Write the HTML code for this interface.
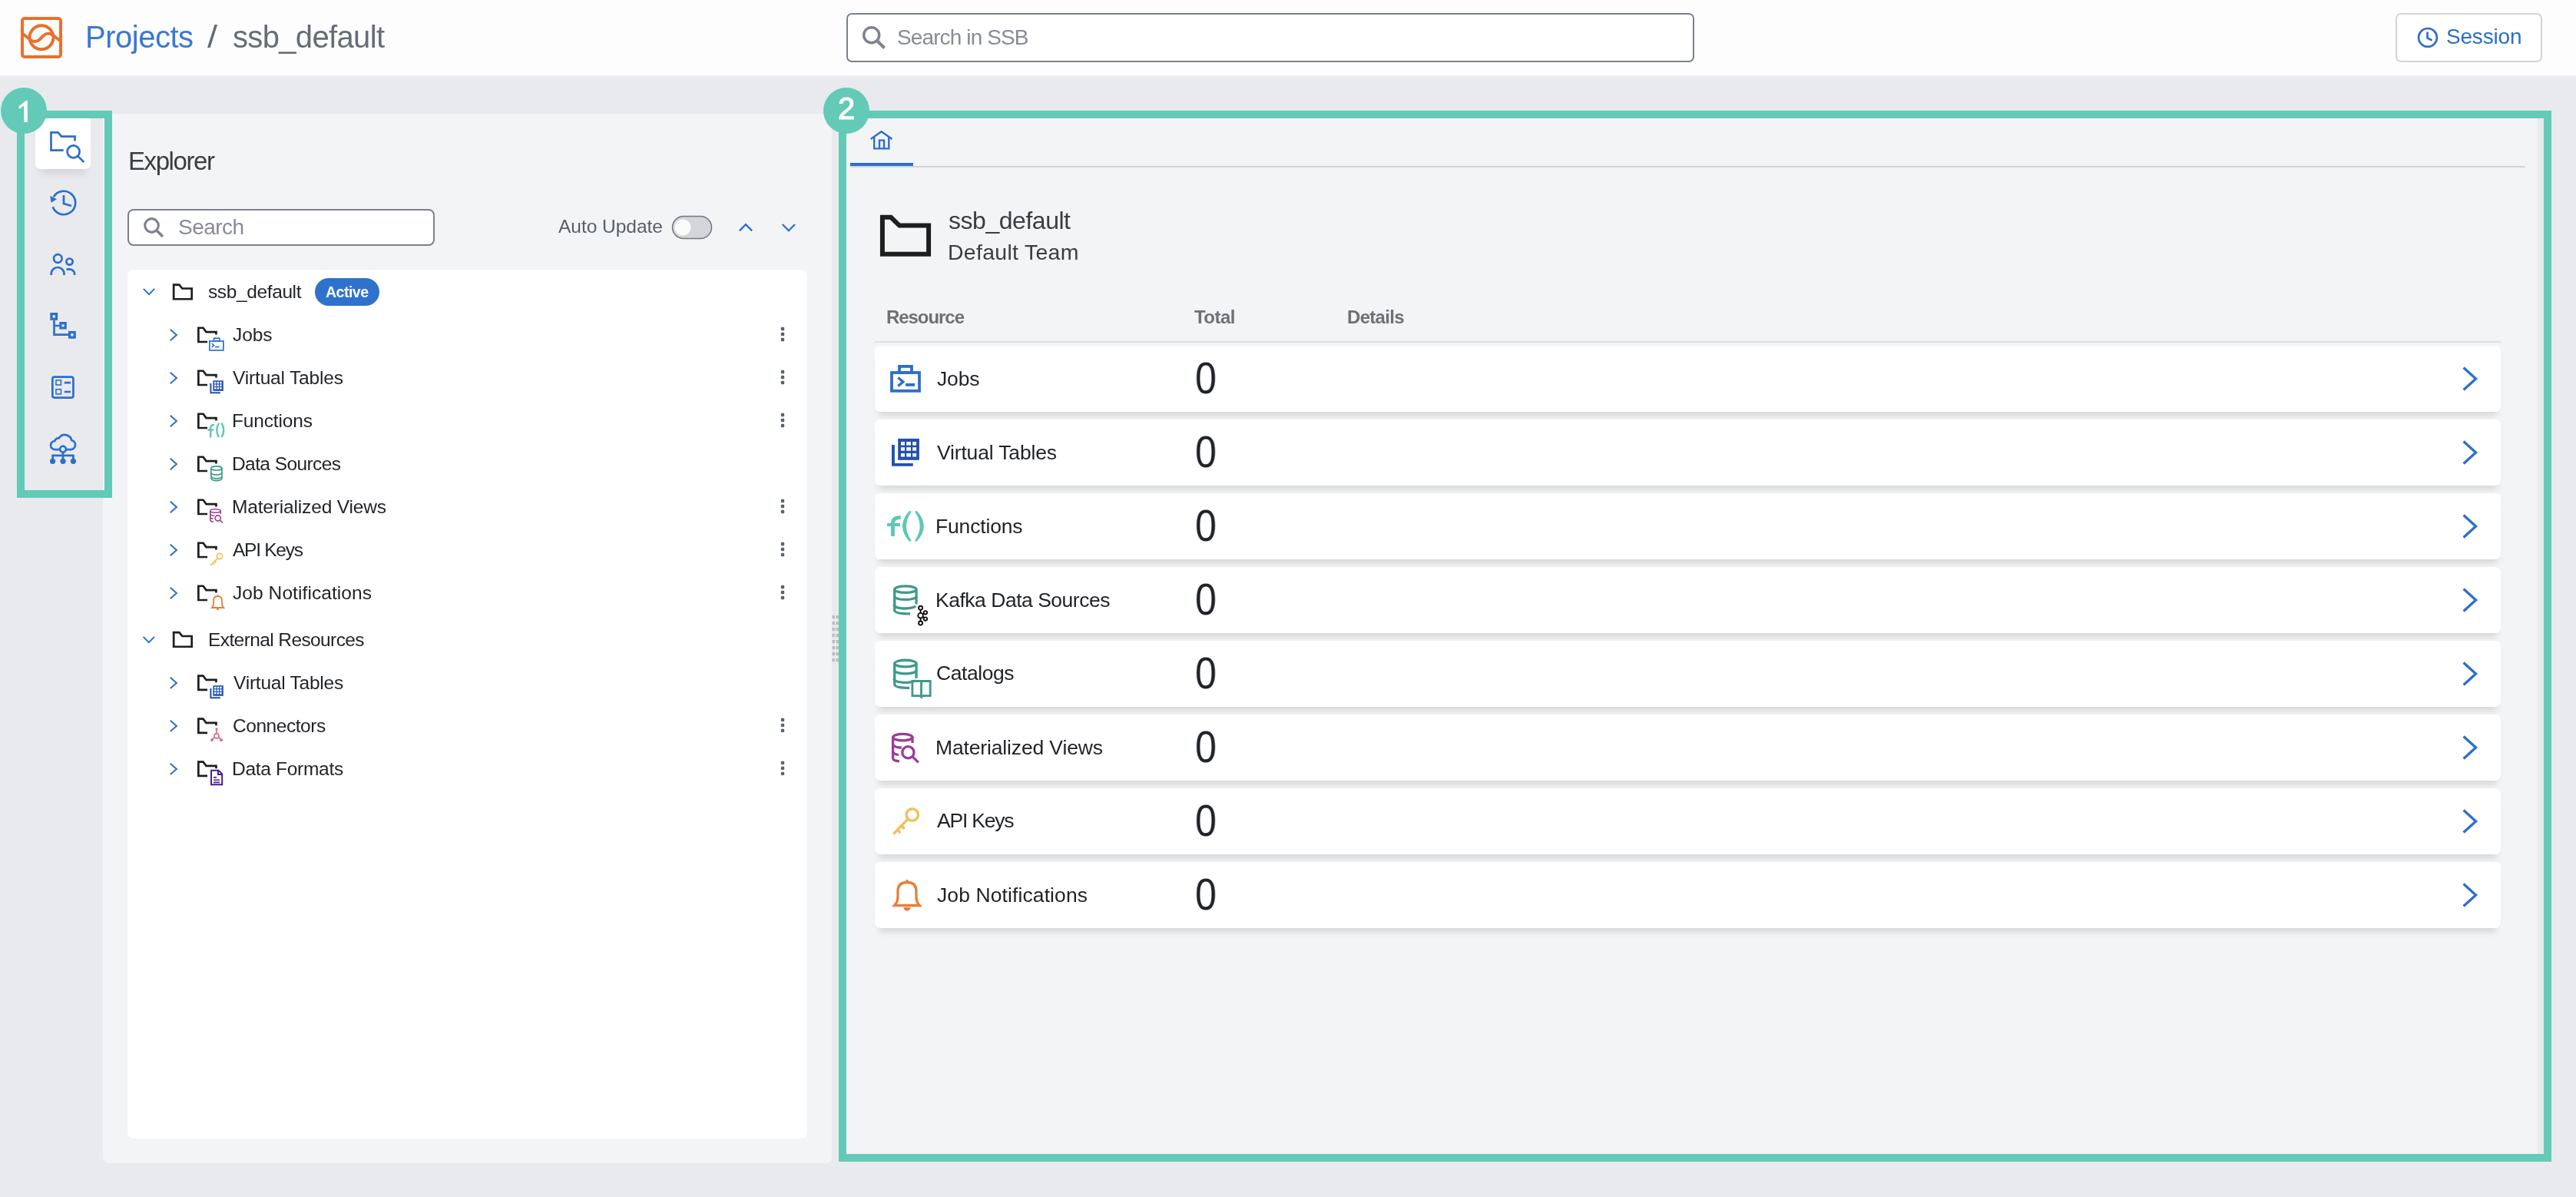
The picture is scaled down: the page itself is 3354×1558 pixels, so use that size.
<!DOCTYPE html>
<html><head><meta charset="utf-8"><style>
*{margin:0;padding:0;box-sizing:border-box}
html,body{width:3354px;height:1558px;overflow:hidden;background:#e9eaed;font-family:"Liberation Sans",sans-serif}
.a{position:absolute}
.t{position:absolute;white-space:nowrap;font-family:"Liberation Sans",sans-serif;will-change:transform}
.card{position:absolute;left:1139px;width:2117px;height:86px;background:#fff;border-radius:7px;box-shadow:0 10px 8px -5px rgba(0,0,0,0.12)}
svg{position:absolute;left:0;top:0}
.ov{z-index:10}
</style></head><body>
<div class="a" style="left:0;top:0;width:3354px;height:98px;background:#fdfdfd"></div><div class="a" style="left:0;top:98px;width:3354px;height:2px;background:#f0f1f3"></div>
<div class="a" style="left:1102px;top:17px;width:1104px;height:64px;border:2px solid #7a8189;border-radius:7px;background:#fff"></div>
<div class="a" style="left:3119px;top:17px;width:191px;height:64px;border:2px solid #d2d5d9;border-radius:7px;background:#fff"></div>
<div class="a" style="left:134px;top:148px;width:949px;height:1366px;background:#f3f4f6;border-radius:0 0 8px 8px"></div>
<div class="a" style="left:1092px;top:148px;width:2212px;height:1364px;background:#f3f4f6"></div>
<div class="a" style="left:46px;top:148px;width:72px;height:72px;background:#fff;border-radius:0 0 7px 7px;box-shadow:0 12px 10px -6px rgba(0,0,0,0.09)"></div>
<div class="a" style="left:166px;top:272px;width:400px;height:48px;border:2px solid #7a8189;border-radius:8px;background:#fff"></div>
<div class="a" style="left:166px;top:351px;width:885px;height:1131px;background:#fff;border-radius:8px"></div>
<div class="a" style="left:410px;top:362px;width:84px;height:36px;background:#2f72cd;border-radius:18px"></div>
<div class="card" style="top:450px"></div><div class="card" style="top:546px"></div><div class="card" style="top:642px"></div><div class="card" style="top:738px"></div><div class="card" style="top:834px"></div><div class="card" style="top:930px"></div><div class="card" style="top:1026px"></div><div class="card" style="top:1122px"></div>
<svg width="3354" height="1558" viewBox="0 0 3354 1558"><g transform="translate(27,22)" fill="none" stroke="#e8702e" stroke-width="4"><rect x="2" y="2" width="50" height="50" rx="3"/><circle cx="27" cy="26.8" r="15.5"/><path d="M2 21.5 L13 30 C16 32.5 21 33 24.5 29.5 L29.5 24.5 C33 21 38 21 41.5 23.5 L52 31.5"/></g><g fill="none" stroke="#7d848b"><circle cx="1134.7" cy="45.7" r="10" stroke-width="3.5"/><path d="M1141.5 52.5 L1151.5 62.5" stroke-width="4"/></g><g fill="none" stroke="#2c6dc9" stroke-width="2.6"><circle cx="3161" cy="48.9" r="11.9"/><path d="M3160.5 41.5 V49.5 L3166.5 52.5"/></g><g fill="none" stroke="#7d848b"><circle cx="197.5" cy="293.5" r="8.8" stroke-width="3.2"/><path d="M203.5 299.5 L212 308" stroke-width="3.5"/></g><g fill="none" stroke="#2c6fcc" stroke-width="2.7"><path d="M97.5 183.4 V177.6 H80 L75.5 172.3 H66.5 V195.6 H82.7"/><circle cx="95.6" cy="197.4" r="8"/><path d="M101.3 203.1 L109.3 211"/><path d="M68.7 269.2 A15.2 15.2 0 1 0 69.8 256.4" /><path d="M83 254 V265 L93 268"/><circle cx="75.3" cy="336.5" r="5.3"/><path d="M66.7 358 V356.4 A8.4 8.4 0 0 1 83.5 356.4 V358"/><circle cx="90.5" cy="340.6" r="4.1"/><path d="M86.5 350.6 C92 349.5 97.2 351.5 97.2 358"/><path d="M70.5 416.7 V435.6 H89 M70.5 424 H77.3"/></g><path d="M65.3 255 L74 259.3 L66.5 263.8 Z" fill="#2c6fcc"/><g fill="none" stroke="#2c6fcc" stroke-width="3.2"><rect x="66.9" y="408.6" width="6.6" height="6.6"/><rect x="78.9" y="420.6" width="6.3" height="6.3"/><rect x="90.6" y="432.5" width="6.6" height="6.6"/></g><g fill="none" stroke="#2c6fcc"><rect x="68.35" y="490.55" width="27.1" height="27" rx="2.5" stroke-width="2.7"/><rect x="72.95" y="494.85" width="6.5" height="6.1" stroke-width="1.6"/><rect x="72.95" y="506.75" width="6.5" height="6.1" stroke-width="1.6"/><path d="M83.8 498.2 H92 M83.8 510 H92" stroke-width="2.7"/></g><g fill="none" stroke="#2c6fcc" stroke-width="2.7"><path d="M77.5 585.2 H72 A5.6 5.6 0 0 1 71.2 574 A6.2 6.2 0 0 1 76.8 570.2 A9 9 0 0 1 93.2 573 A6.2 6.2 0 0 1 92.5 585.2 H86.5"/><circle cx="82" cy="584.6" r="3.9"/><path d="M82 588.5 V600 M68.6 600 V592.8 H95.4 V600"/></g><g fill="#2c6fcc"><circle cx="68.6" cy="600.3" r="3.6"/><circle cx="82" cy="600.3" r="3.6"/><circle cx="95.4" cy="600.3" r="3.6"/></g><polyline points="186.8,375.9 194,383.1 201.2,375.9" fill="none" stroke="#2c6fcc" stroke-width="2"/><path d="M226.15 370.65 H233.3 L237.3 375.5 H249.65 V389.25 H226.15 Z" fill="none" stroke="#1e1e1e" stroke-width="2.7"/><polyline points="221.7,428.8 229.9,436 221.7,443.2" fill="none" stroke="#2c6fcc" stroke-width="2"/><path d="M270 445 H258.35 V426.75 H264.5 L268.5 432.05 H281.45 V435.4" fill="none" stroke="#1e1e1e" stroke-width="2.7"/><rect x="1016.8" y="425.8" width="4.4" height="4.4" rx="1.2" fill="#5c636a"/><rect x="1016.8" y="432.8" width="4.4" height="4.4" rx="1.2" fill="#5c636a"/><rect x="1016.8" y="439.8" width="4.4" height="4.4" rx="1.2" fill="#5c636a"/><polyline points="221.7,484.8 229.9,492 221.7,499.2" fill="none" stroke="#2c6fcc" stroke-width="2"/><path d="M270 501 H258.35 V482.75 H264.5 L268.5 488.05 H281.45 V491.4" fill="none" stroke="#1e1e1e" stroke-width="2.7"/><rect x="1016.8" y="481.8" width="4.4" height="4.4" rx="1.2" fill="#5c636a"/><rect x="1016.8" y="488.8" width="4.4" height="4.4" rx="1.2" fill="#5c636a"/><rect x="1016.8" y="495.8" width="4.4" height="4.4" rx="1.2" fill="#5c636a"/><polyline points="221.7,540.8 229.9,548 221.7,555.2" fill="none" stroke="#2c6fcc" stroke-width="2"/><path d="M270 557 H258.35 V538.75 H264.5 L268.5 544.05 H281.45 V547.4" fill="none" stroke="#1e1e1e" stroke-width="2.7"/><rect x="1016.8" y="537.8" width="4.4" height="4.4" rx="1.2" fill="#5c636a"/><rect x="1016.8" y="544.8" width="4.4" height="4.4" rx="1.2" fill="#5c636a"/><rect x="1016.8" y="551.8" width="4.4" height="4.4" rx="1.2" fill="#5c636a"/><polyline points="221.7,596.8 229.9,604 221.7,611.2" fill="none" stroke="#2c6fcc" stroke-width="2"/><path d="M270 613 H258.35 V594.75 H264.5 L268.5 600.05 H281.45 V603.4" fill="none" stroke="#1e1e1e" stroke-width="2.7"/><polyline points="221.7,652.8 229.9,660 221.7,667.2" fill="none" stroke="#2c6fcc" stroke-width="2"/><path d="M270 669 H258.35 V650.75 H264.5 L268.5 656.05 H281.45 V659.4" fill="none" stroke="#1e1e1e" stroke-width="2.7"/><rect x="1016.8" y="649.8" width="4.4" height="4.4" rx="1.2" fill="#5c636a"/><rect x="1016.8" y="656.8" width="4.4" height="4.4" rx="1.2" fill="#5c636a"/><rect x="1016.8" y="663.8" width="4.4" height="4.4" rx="1.2" fill="#5c636a"/><polyline points="221.7,708.8 229.9,716 221.7,723.2" fill="none" stroke="#2c6fcc" stroke-width="2"/><path d="M270 725 H258.35 V706.75 H264.5 L268.5 712.05 H281.45 V715.4" fill="none" stroke="#1e1e1e" stroke-width="2.7"/><rect x="1016.8" y="705.8" width="4.4" height="4.4" rx="1.2" fill="#5c636a"/><rect x="1016.8" y="712.8" width="4.4" height="4.4" rx="1.2" fill="#5c636a"/><rect x="1016.8" y="719.8" width="4.4" height="4.4" rx="1.2" fill="#5c636a"/><polyline points="221.7,764.8 229.9,772 221.7,779.2" fill="none" stroke="#2c6fcc" stroke-width="2"/><path d="M270 781 H258.35 V762.75 H264.5 L268.5 768.05 H281.45 V771.4" fill="none" stroke="#1e1e1e" stroke-width="2.7"/><rect x="1016.8" y="761.8" width="4.4" height="4.4" rx="1.2" fill="#5c636a"/><rect x="1016.8" y="768.8" width="4.4" height="4.4" rx="1.2" fill="#5c636a"/><rect x="1016.8" y="775.8" width="4.4" height="4.4" rx="1.2" fill="#5c636a"/><polyline points="186.60000000000002,828.9 193.8,836.1 201.0,828.9" fill="none" stroke="#2c6fcc" stroke-width="2"/><path d="M226.15 823.15 H233.3 L237.3 828.0 H249.65 V841.75 H226.15 Z" fill="none" stroke="#1e1e1e" stroke-width="2.7"/><polyline points="221.7,881.6999999999999 229.9,888.9 221.7,896.1" fill="none" stroke="#2c6fcc" stroke-width="2"/><path d="M270 897.9 H258.35 V879.65 H264.5 L268.5 884.9499999999999 H281.45 V888.3" fill="none" stroke="#1e1e1e" stroke-width="2.7"/><polyline points="221.7,937.6999999999999 229.9,944.9 221.7,952.1" fill="none" stroke="#2c6fcc" stroke-width="2"/><path d="M270 953.9 H258.35 V935.65 H264.5 L268.5 940.9499999999999 H281.45 V944.3" fill="none" stroke="#1e1e1e" stroke-width="2.7"/><rect x="1016.8" y="934.6999999999999" width="4.4" height="4.4" rx="1.2" fill="#5c636a"/><rect x="1016.8" y="941.6999999999999" width="4.4" height="4.4" rx="1.2" fill="#5c636a"/><rect x="1016.8" y="948.6999999999999" width="4.4" height="4.4" rx="1.2" fill="#5c636a"/><polyline points="221.7,993.6999999999999 229.9,1000.9 221.7,1008.1" fill="none" stroke="#2c6fcc" stroke-width="2"/><path d="M270 1009.9 H258.35 V991.65 H264.5 L268.5 996.9499999999999 H281.45 V1000.3" fill="none" stroke="#1e1e1e" stroke-width="2.7"/><rect x="1016.8" y="990.6999999999999" width="4.4" height="4.4" rx="1.2" fill="#5c636a"/><rect x="1016.8" y="997.6999999999999" width="4.4" height="4.4" rx="1.2" fill="#5c636a"/><rect x="1016.8" y="1004.6999999999999" width="4.4" height="4.4" rx="1.2" fill="#5c636a"/><g fill="none" stroke="#2c6fcc" stroke-width="1.7"><rect x="272.85" y="443.95" width="18" height="12"/><rect x="278.6" y="440.25" width="7.2" height="3.7"/><polyline points="275.8,447 278.4,449.4 275.8,451.8"/><path d="M280 451.5 H285.5"/></g><rect x="277.4" y="495.3" width="13.4" height="13.6" fill="#2251b3"/><rect x="279.0" y="496.9" width="2.4" height="2.4" fill="#fff"/><rect x="282.6" y="496.9" width="2.4" height="2.4" fill="#fff"/><rect x="286.2" y="496.9" width="2.4" height="2.4" fill="#fff"/><rect x="279.0" y="500.5" width="2.4" height="2.4" fill="#fff"/><rect x="282.6" y="500.5" width="2.4" height="2.4" fill="#fff"/><rect x="286.2" y="500.5" width="2.4" height="2.4" fill="#fff"/><rect x="279.0" y="504.1" width="2.4" height="2.4" fill="#fff"/><rect x="282.6" y="504.1" width="2.4" height="2.4" fill="#fff"/><rect x="286.2" y="504.1" width="2.4" height="2.4" fill="#fff"/><path d="M274.4 499 V511.3 H286.8" fill="none" stroke="#2251b3" stroke-width="2"/><g fill="none" stroke="#5ec8b4" stroke-width="2.4"><path d="M274.2 569.5 V557 Q274.2 553 279 553"/><path d="M270.5 559.5 H278.5"/><path d="M285 550.5 Q279.5 559.7 285 569"/><path d="M288.5 550.5 Q294 559.7 288.5 569"/></g><g fill="none" stroke="#3f9a8a" stroke-width="1.6"><ellipse cx="281.9" cy="609.472" rx="7.1000000000000005" ry="2.572"/><path d="M274.8 609.472 V622.528 A7.1000000000000005 3.072 0 0 0 289.0 622.528 V609.472"/><path d="M274.8 615.04 A7.1000000000000005 3.072 0 0 0 289.0 615.04"/><path d="M274.8 619.84 A7.1000000000000005 3.072 0 0 0 289.0 619.84"/></g><g fill="none" stroke="#9c3d96" stroke-width="1.6"><ellipse cx="280.5" cy="665" rx="6.7" ry="2.2"/><path d="M273.8 665 V677.5 Q275 679 278 679.2"/><path d="M287.2 665 V669"/><path d="M273.8 669.5 Q276 671.3 279.5 671.3"/><path d="M273.8 673.8 Q275 675.2 277.5 675.3"/><circle cx="283.7" cy="674.5" r="3.6"/><path d="M286.3 677.1 L290 680.5"/></g><g fill="none" stroke="#eec15b" stroke-width="1.7"><circle cx="286" cy="724" r="3.6"/><path d="M283.5 726.6 L274 736.2 M277.2 733 L279 734.8 M279.6 730.6 L281.4 732.4"/></g><g fill="none" stroke="#e27f3b" stroke-width="1.8"><path d="M276 791 H291 Q289 789 289 786 V782 Q289 776 283.5 776 Q278 776 278 782 V786 Q278 789 276 791 Z"/></g><circle cx="283.5" cy="792.5" r="1.6" fill="#e27f3b"/><circle cx="283.5" cy="775" r="1" fill="#e27f3b"/><rect x="277.4" y="892.1999999999999" width="13.4" height="13.6" fill="#2251b3"/><rect x="279.0" y="893.8" width="2.4" height="2.4" fill="#fff"/><rect x="282.6" y="893.8" width="2.4" height="2.4" fill="#fff"/><rect x="286.2" y="893.8" width="2.4" height="2.4" fill="#fff"/><rect x="279.0" y="897.4" width="2.4" height="2.4" fill="#fff"/><rect x="282.6" y="897.4" width="2.4" height="2.4" fill="#fff"/><rect x="286.2" y="897.4" width="2.4" height="2.4" fill="#fff"/><rect x="279.0" y="901.0" width="2.4" height="2.4" fill="#fff"/><rect x="282.6" y="901.0" width="2.4" height="2.4" fill="#fff"/><rect x="286.2" y="901.0" width="2.4" height="2.4" fill="#fff"/><path d="M274.4 895.9 V908.1999999999999 H286.8" fill="none" stroke="#2251b3" stroke-width="2"/><g fill="none" stroke="#d9678c" stroke-width="1.6"><circle cx="282" cy="957.9" r="3"/><path d="M282 948.9 V954.9 M279.4 959.4 L276 962.9 M284.6 959.4 L288 962.9"/></g><g fill="#d9678c"><circle cx="282" cy="948.9" r="1.6"/><circle cx="276" cy="963.1999999999999" r="1.9"/><circle cx="288" cy="963.1999999999999" r="1.9"/></g><g fill="none" stroke="#4c1d95" stroke-width="2"><path d="M275 1002.6999999999999 H284.5 L289.2 1007.4 V1021.1999999999999 H275 Z"/><path d="M284 1002.9 V1007.9 H289"/><path d="M278 1011.9 H282 M278 1015.1999999999999 H286 M278 1018.4 H286" stroke-width="1.6"/></g><polyline points="962.8,300.4 971,292.2 979.2,300.4" fill="none" stroke="#2c6fcc" stroke-width="2.3"/><polyline points="1018.8,292 1026.9,300.2 1035,292" fill="none" stroke="#2c6fcc" stroke-width="2.3"/><rect x="875.5" y="281.5" width="51" height="29" rx="14.5" fill="#d4d5da" stroke="#6f7680" stroke-width="1.5"/><circle cx="889" cy="296" r="11" fill="#fbfbfb" stroke="#c9cacd" stroke-width="0.6"/><rect x="1083.5" y="801" width="3.5" height="4.2" fill="#bdbdbd"/><rect x="1088.5" y="801" width="3.5" height="4.2" fill="#bdbdbd"/><rect x="1083.5" y="809" width="3.5" height="4.2" fill="#bdbdbd"/><rect x="1088.5" y="809" width="3.5" height="4.2" fill="#bdbdbd"/><rect x="1083.5" y="817" width="3.5" height="4.2" fill="#bdbdbd"/><rect x="1088.5" y="817" width="3.5" height="4.2" fill="#bdbdbd"/><rect x="1083.5" y="825" width="3.5" height="4.2" fill="#bdbdbd"/><rect x="1088.5" y="825" width="3.5" height="4.2" fill="#bdbdbd"/><rect x="1083.5" y="833" width="3.5" height="4.2" fill="#bdbdbd"/><rect x="1088.5" y="833" width="3.5" height="4.2" fill="#bdbdbd"/><rect x="1083.5" y="841" width="3.5" height="4.2" fill="#bdbdbd"/><rect x="1088.5" y="841" width="3.5" height="4.2" fill="#bdbdbd"/><rect x="1083.5" y="849" width="3.5" height="4.2" fill="#bdbdbd"/><rect x="1088.5" y="849" width="3.5" height="4.2" fill="#bdbdbd"/><rect x="1083.5" y="857" width="3.5" height="4.2" fill="#bdbdbd"/><rect x="1088.5" y="857" width="3.5" height="4.2" fill="#bdbdbd"/><g fill="none" stroke="#2c6fcc" stroke-width="2.4"><polyline points="1133.8,181 1147.6,171.2 1161.5,181"/><path d="M1138.2 178.5 V193.4 H1157.3 V178.5 M1145 193.4 V182.6 H1151 V193.4"/></g><rect x="1107" y="216" width="2181" height="2" fill="#d3d4d8"/><rect x="1107" y="212" width="82" height="4" fill="#2c6fcc"/><path d="M1148.9 282.8 H1160 L1171 293.6 H1209.1 V330.8 H1148.9 Z" fill="none" stroke="#1e1e1e" stroke-width="6"/><rect x="1139" y="444" width="2117" height="2" fill="#dfe0e3"/><g fill="none" stroke="#2c6fcc" stroke-width="3.8"><rect x="1161" y="485" width="36" height="23.8"/><rect x="1171" y="476.9" width="16" height="8"/><polyline points="1169.3,491.5 1175.8,497 1169.3,502.5" stroke-width="3.5"/></g><rect x="1179.1" y="498.9" width="12.1" height="3.9" fill="#2c6fcc"/><polyline points="3207.6,478.5 3223.6,493 3207.6,507.5" fill="none" stroke="#2c6fcc" stroke-width="3.3"/><rect x="1169.2" y="570.9" width="27.7" height="27.9" fill="#2350b0"/><rect x="1173" y="575" width="5" height="4.6" fill="#fff"/><rect x="1173" y="582.2" width="5" height="4.5" fill="#fff"/><rect x="1173" y="590" width="5" height="4.5" fill="#fff"/><rect x="1180.2" y="575" width="5.8" height="4.6" fill="#fff"/><rect x="1180.2" y="582.2" width="5.8" height="4.5" fill="#fff"/><rect x="1180.2" y="590" width="5.8" height="4.5" fill="#fff"/><rect x="1188.2" y="575" width="4.9" height="4.6" fill="#fff"/><rect x="1188.2" y="582.2" width="4.9" height="4.5" fill="#fff"/><rect x="1188.2" y="590" width="4.9" height="4.5" fill="#fff"/><path d="M1162.95 579 V604.85 H1188.8" fill="none" stroke="#2350b0" stroke-width="3.9"/><polyline points="3207.6,574.5 3223.6,589 3207.6,603.5" fill="none" stroke="#2c6fcc" stroke-width="3.3"/><g fill="none" stroke="#5fc8b5"><path d="M1162.5 698 V681 Q1162.5 673.5 1172.7 673.5" stroke-width="4.8"/><path d="M1155 683 H1172" stroke-width="4"/></g><path d="M1184 665 Q1166 684.8 1184 704.7 L1186.9 704 Q1173.3 684.8 1186.9 665.7 Z" fill="#5fc8b5"/><path d="M1193.8 665 Q1211.8 684.8 1193.8 704.7 L1190.9 704 Q1204.5 684.8 1190.9 665.7 Z" fill="#5fc8b5"/><polyline points="3207.6,670.5 3223.6,685 3207.6,699.5" fill="none" stroke="#2c6fcc" stroke-width="3.3"/><g fill="none" stroke="#3f9a8a" stroke-width="3.3"><ellipse cx="1178.8999999999999" cy="767.15" rx="14.15" ry="4.3"/><path d="M1164.75 767.15 V794.3000000000001  Q1164.75 798.95 1185.1 798.95"/><path d="M1193.0499999999997 767.15 V786.416"/><path d="M1164.75 776.172 A14.15 4.3 0 0 0 1193.0499999999997 776.172"/><path d="M1164.75 786.416 A14.15 4.3 0 0 0 1192.0499999999997 788.916"/></g><g fill="none" stroke="#111" stroke-width="1.9"><circle cx="1198.6" cy="791.3" r="2.5"/><circle cx="1198.6" cy="801.2" r="3.3"/><circle cx="1198.6" cy="811" r="2.5"/><circle cx="1204.9" cy="797.3" r="2.2"/><circle cx="1204.9" cy="805.6" r="2.2"/><path d="M1198.6 793.3 V798 M1198.6 804 V808.9 M1201.3 799.5 L1203.2 798.2 M1201.3 802.6 L1203.2 804.2"/></g><polyline points="3207.6,766.5 3223.6,781 3207.6,795.5" fill="none" stroke="#2c6fcc" stroke-width="3.3"/><g fill="none" stroke="#3f9a8a" stroke-width="3.3"><ellipse cx="1178.8999999999999" cy="863.55" rx="14.15" ry="4.3"/><path d="M1164.75 863.55 V890.7  Q1164.75 895.35 1184.1 895.35"/><path d="M1193.0499999999997 863.55 V882.816"/><path d="M1164.75 872.572 A14.15 4.3 0 0 0 1193.0499999999997 872.572"/><path d="M1164.75 882.816 A14.15 4.3 0 0 0 1192.0499999999997 885.316"/><path d="M1187.9 886.5 H1199.5 V906 L1199.5 907.2 L1197.5 905.7 H1187.9 Z M1199.5 886.5 H1211.2 V905.7 H1201.5 L1199.5 907.2" stroke-width="2.8"/></g><polyline points="3207.6,862.5 3223.6,877 3207.6,891.5" fill="none" stroke="#2c6fcc" stroke-width="3.3"/><g fill="none" stroke="#9c3d96" stroke-width="3.3"><ellipse cx="1175.3" cy="959.6" rx="12.7" ry="4.2"/><path d="M1162.6 959.6 V987 Q1163 990.5 1171 990.8"/><path d="M1188 959.6 V967"/><path d="M1162.6 969 Q1164 973 1174 973.2"/><path d="M1162.6 978.5 Q1164 982 1170 982.3"/><circle cx="1182.4" cy="979.2" r="7.6"/><path d="M1187.8 984.6 L1195.8 992.4"/></g><polyline points="3207.6,958.5 3223.6,973 3207.6,987.5" fill="none" stroke="#2c6fcc" stroke-width="3.3"/><g fill="none" stroke="#efc25c" stroke-width="3.4"><circle cx="1187.8" cy="1060.5" r="7.7"/><path d="M1182.3 1066 L1163.3 1085.5 M1168.5 1080.3 L1172.5 1084.3 M1173.8 1075 L1177.8 1079"/></g><polyline points="3207.6,1054.5 3223.6,1069 3207.6,1083.5" fill="none" stroke="#2c6fcc" stroke-width="3.3"/><g fill="none" stroke="#e5803a" stroke-width="3.3"><path d="M1164.7 1178.5 H1197.2 Q1193 1174 1193 1167 V1160 Q1193 1148.5 1181 1148.5 Q1169 1148.5 1169 1160 V1167 Q1169 1174 1164.7 1178.5 Z"/></g><path d="M1176.5 1181 A4.5 4.5 0 0 0 1185.5 1181 Z" fill="#e5803a"/><rect x="1179.5" y="1145" width="3" height="3.5" fill="#e5803a"/><polyline points="3207.6,1150.5 3223.6,1165 3207.6,1179.5" fill="none" stroke="#2c6fcc" stroke-width="3.3"/></svg>
<div class="t" style="left:111.00px;top:28.03px;font-size:40px;line-height:40px;letter-spacing:-0.497px;color:#3a78d0;">Projects</div><div class="t" style="left:270.00px;top:28.03px;font-size:40px;line-height:40px;transform:scaleX(1.1740);transform-origin:0 0;color:#656d75;">/</div><div class="t" style="left:303.00px;top:27.93px;font-size:40px;line-height:40px;letter-spacing:-0.660px;color:#656d75;">ssb_default</div><div class="t" style="left:1168.00px;top:35.49px;font-size:28px;line-height:28px;letter-spacing:-0.882px;color:#868c93;">Search in SSB</div><div class="t" style="left:3185.00px;top:34.49px;font-size:28px;line-height:28px;letter-spacing:-0.187px;color:#2c6dc9;">Session</div><div class="t" style="left:166.50px;top:192.86px;font-size:33px;line-height:33px;letter-spacing:-1.413px;color:#3a3d41;">Explorer</div><div class="t" style="left:232.00px;top:282.29px;font-size:28px;line-height:28px;letter-spacing:-0.541px;color:#868c93;">Search</div><div class="t" style="left:726.50px;top:282.86px;font-size:24.5px;line-height:24.5px;letter-spacing:-0.022px;color:#56606a;">Auto Update</div><div class="t" style="left:270.50px;top:368.26px;font-size:24.5px;line-height:24.5px;letter-spacing:-0.382px;color:#1f2226;">ssb_default</div><div class="t" style="left:424.00px;top:371.49px;font-size:19.5px;line-height:19.5px;letter-spacing:-0.504px;color:#ffffff;font-weight:700;">Active</div><div class="t" style="left:303.00px;top:424.06px;font-size:24.5px;line-height:24.5px;letter-spacing:-0.081px;color:#1f2226;">Jobs</div><div class="t" style="left:303.00px;top:480.06px;font-size:24.5px;line-height:24.5px;letter-spacing:-0.169px;color:#1f2226;">Virtual Tables</div><div class="t" style="left:302.00px;top:536.06px;font-size:24.5px;line-height:24.5px;letter-spacing:-0.151px;color:#1f2226;">Functions</div><div class="t" style="left:302.00px;top:592.06px;font-size:24.5px;line-height:24.5px;letter-spacing:-0.586px;color:#1f2226;">Data Sources</div><div class="t" style="left:302.00px;top:648.06px;font-size:24.5px;line-height:24.5px;letter-spacing:-0.164px;color:#1f2226;">Materialized Views</div><div class="t" style="left:303.00px;top:704.06px;font-size:24.5px;line-height:24.5px;letter-spacing:-1.253px;color:#1f2226;">API Keys</div><div class="t" style="left:303.00px;top:760.06px;font-size:24.5px;line-height:24.5px;letter-spacing:0.078px;color:#1f2226;">Job Notifications</div><div class="t" style="left:270.90px;top:821.06px;font-size:24.5px;line-height:24.5px;letter-spacing:-0.599px;color:#1f2226;">External Resources</div><div class="t" style="left:303.80px;top:877.06px;font-size:24.5px;line-height:24.5px;letter-spacing:-0.230px;color:#1f2226;">Virtual Tables</div><div class="t" style="left:302.80px;top:933.06px;font-size:24.5px;line-height:24.5px;letter-spacing:-0.455px;color:#1f2226;">Connectors</div><div class="t" style="left:301.80px;top:989.06px;font-size:24.5px;line-height:24.5px;letter-spacing:-0.291px;color:#1f2226;">Data Formats</div><div class="t" style="left:1235.00px;top:270.91px;font-size:32px;line-height:32px;letter-spacing:-0.468px;color:#3a3d41;">ssb_default</div><div class="t" style="left:1234.00px;top:314.07px;font-size:28.5px;line-height:28.5px;letter-spacing:0.281px;color:#3a3d41;">Default Team</div><div class="t" style="left:1154.00px;top:400.88px;font-size:24px;line-height:24px;letter-spacing:-1.056px;color:#6d7175;font-weight:700;">Resource</div><div class="t" style="left:1555.00px;top:400.88px;font-size:24px;line-height:24px;letter-spacing:-0.509px;color:#6d7175;font-weight:700;">Total</div><div class="t" style="left:1754.00px;top:400.88px;font-size:24px;line-height:24px;letter-spacing:-0.699px;color:#6d7175;font-weight:700;">Details</div><div class="t" style="left:1219.50px;top:479.66px;font-size:26.5px;line-height:26.5px;letter-spacing:-0.156px;color:#1f2226;">Jobs</div><div class="t" style="left:1556.40px;top:464.34px;font-size:57px;line-height:57px;transform:scaleX(0.8819);transform-origin:0 0;color:#1f2226;">0</div><div class="t" style="left:1219.50px;top:575.66px;font-size:26.5px;line-height:26.5px;letter-spacing:-0.163px;color:#1f2226;">Virtual Tables</div><div class="t" style="left:1556.40px;top:560.34px;font-size:57px;line-height:57px;transform:scaleX(0.8819);transform-origin:0 0;color:#1f2226;">0</div><div class="t" style="left:1217.50px;top:671.66px;font-size:26.5px;line-height:26.5px;letter-spacing:-0.172px;color:#1f2226;">Functions</div><div class="t" style="left:1556.40px;top:656.34px;font-size:57px;line-height:57px;transform:scaleX(0.8819);transform-origin:0 0;color:#1f2226;">0</div><div class="t" style="left:1217.50px;top:767.66px;font-size:26.5px;line-height:26.5px;letter-spacing:-0.482px;color:#1f2226;">Kafka Data Sources</div><div class="t" style="left:1556.40px;top:752.34px;font-size:57px;line-height:57px;transform:scaleX(0.8819);transform-origin:0 0;color:#1f2226;">0</div><div class="t" style="left:1218.50px;top:862.76px;font-size:26.5px;line-height:26.5px;letter-spacing:-0.442px;color:#1f2226;">Catalogs</div><div class="t" style="left:1556.40px;top:848.34px;font-size:57px;line-height:57px;transform:scaleX(0.8819);transform-origin:0 0;color:#1f2226;">0</div><div class="t" style="left:1217.50px;top:959.66px;font-size:26.5px;line-height:26.5px;letter-spacing:-0.143px;color:#1f2226;">Materialized Views</div><div class="t" style="left:1556.40px;top:944.34px;font-size:57px;line-height:57px;transform:scaleX(0.8819);transform-origin:0 0;color:#1f2226;">0</div><div class="t" style="left:1219.50px;top:1054.76px;font-size:26.5px;line-height:26.5px;letter-spacing:-1.213px;color:#1f2226;">API Keys</div><div class="t" style="left:1556.40px;top:1040.34px;font-size:57px;line-height:57px;transform:scaleX(0.8819);transform-origin:0 0;color:#1f2226;">0</div><div class="t" style="left:1219.50px;top:1151.66px;font-size:26.5px;line-height:26.5px;letter-spacing:0.098px;color:#1f2226;">Job Notifications</div><div class="t" style="left:1556.40px;top:1136.34px;font-size:57px;line-height:57px;transform:scaleX(0.8819);transform-origin:0 0;color:#1f2226;">0</div>
<svg class="ov" width="3354" height="1558" viewBox="0 0 3354 1558"><rect x="27" y="149" width="114" height="494" fill="none" stroke="#62cab6" stroke-width="10"/><rect x="1097" y="149" width="2220" height="1358" fill="none" stroke="#62cab6" stroke-width="10"/><circle cx="31" cy="144" r="30" fill="#62cab6"/><circle cx="1102" cy="144" r="30" fill="#62cab6"/></svg>
<svg class="ov" style="z-index:11" width="3354" height="1558" viewBox="0 0 3354 1558"><path d="M31.3 159 V137.6 L24.8 141.9 V137.9 L34.3 130.8 H35.8 V159 Z" fill="#fff"/></svg>
<div class="t" style="z-index:12;left:1091px;top:121.3px;font-size:40px;line-height:40px;color:#fff;-webkit-text-stroke:1.2px #fff">2</div>
</body></html>
